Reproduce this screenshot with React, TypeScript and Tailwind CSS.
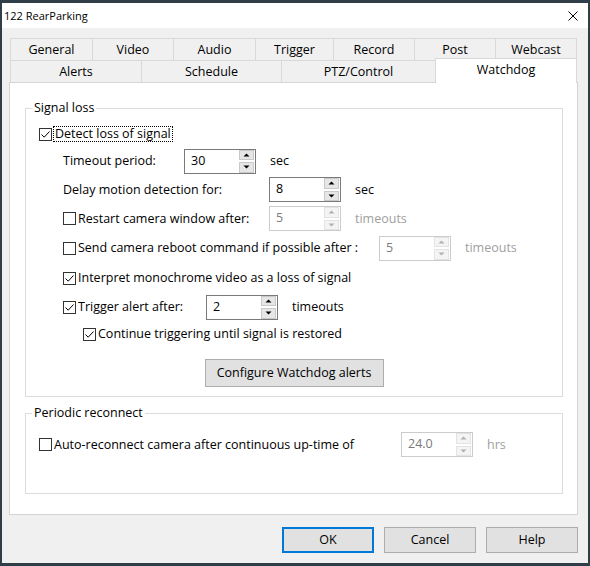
import React from "react";

function Check({ checked }: { checked?: boolean }) {
  return (
    <span className="w-[13px] h-[13px] border border-[#333333] bg-white flex items-center justify-center shrink-0">
      {checked && (
        <svg width="11" height="11" viewBox="0 0 11 11">
          <path d="M1.5 5.5 L4.2 8.2 L9.5 2.5" fill="none" stroke="#000" strokeWidth="1" />
        </svg>
      )}
    </span>
  );
}

function SpinBtn({ up, disabled }: { up?: boolean; disabled?: boolean }) {
  return (
    <div
      className={`flex-1 flex items-center justify-center border ${
        disabled ? "border-[#e3e3e3] bg-[#f4f4f4]" : "border-[#c9c9c9] bg-[#e6e6e6]"
      }`}
    >
      <svg width="7" height="4" viewBox="0 0 7 4">
        <path
          d={up ? "M0.5 3.5 L3.5 0.5 L6.5 3.5 Z" : "M0.5 0.5 L3.5 3.5 L6.5 0.5 Z"}
          fill={disabled ? "#b0b0b0" : "#000"}
        />
      </svg>
    </div>
  );
}

function Spin({ value, disabled }: { value: string; disabled?: boolean }) {
  return (
    <div
      className={`w-[72px] h-[25px] shrink-0 border bg-white flex ${
        disabled ? "border-[#cccccc]" : "border-[#7a7a7a]"
      }`}
    >
      <span
        className={`flex-1 pl-[6px] leading-[22px] ${
          disabled ? "text-[#7a7a7a]" : "text-black"
        }`}
      >
        {value}
      </span>
      <div className="w-[16px] flex flex-col gap-[2px] pr-[1px] py-[0px]">
        <SpinBtn up disabled={disabled} />
        <SpinBtn disabled={disabled} />
      </div>
    </div>
  );
}

function Unit({ children, disabled }: { children: React.ReactNode; disabled?: boolean }) {
  return (
    <span className={`ml-[14px] ${disabled ? "text-[#a0a0a0]" : "text-black"}`}>{children}</span>
  );
}

function Tab({ label, w, last }: { label: string; w: string; last?: boolean }) {
  return (
    <div
      className={`${w} h-full flex items-center justify-center border-t border-l border-[#d9d9d9] bg-[#f0f0f0] ${
        last ? "border-r" : ""
      }`}
    >
      {label}
    </div>
  );
}

export default function App() {
  return (
    <div className="w-[590px] h-[566px] bg-[#2f3e49] pt-[3px] pl-[2px] font-['Open_Sans','Noto_Sans',sans-serif] text-[12.5px] text-black leading-[16px]">
      <div className="w-[586px] h-[560px] bg-[#f0f0f0] flex flex-col">
        {/* title bar */}
        <div className="h-[25px] bg-white flex items-center justify-between pl-[2px] pr-[10px]">
          <span className="text-[11px]">122 RearParking</span>
          <svg width="10" height="10" viewBox="0 0 10 10">
            <path d="M0.5 0.5 L9.5 9.5 M9.5 0.5 L0.5 9.5" stroke="#000" strokeWidth="1" />
          </svg>
        </div>

        {/* body */}
        <div className="flex-1 flex flex-col pt-[10px] pl-[7px] pr-[10px]">
          {/* tabs */}
          <div className="ml-[1px] w-[567px] flex flex-col">
            <div className="h-[22px] flex">
              <Tab label="General" w="w-[82px]" />
              <Tab label="Video" w="w-[81px]" />
              <Tab label="Audio" w="w-[82px]" />
              <Tab label="Trigger" w="w-[78px]" />
              <Tab label="Record" w="w-[81px]" />
              <Tab label="Post" w="w-[81px]" />
              <Tab label="Webcast" w="w-[82px]" last />
            </div>
            <div className="h-[22px] flex">
              <Tab label="Alerts" w="w-[131px]" />
              <Tab label="Schedule" w="w-[140px]" />
              <Tab label="PTZ/Control" w="w-[154px]" />
              <div className="w-[142px] h-[25px] self-end -mb-px relative z-10 bg-white border-t border-l border-r border-[#d9d9d9] flex items-center justify-center pb-[2px]">
                Watchdog
              </div>
            </div>
          </div>

          {/* panel */}
          <div className="w-[569px] h-[433px] bg-white border border-[#d5d5d5] pt-[17px] pl-[15px] pr-[14px]">
            <fieldset className="border border-[#dcdcdc] pl-[13px] pt-[5px] pb-[9px]">
              <legend className="-ml-[7px] px-[2px] leading-[16px]">Signal loss</legend>
              <div className="h-[26px] flex items-center">
                <Check checked />
                <span className="ml-[1px] border border-dotted border-black px-[1px] leading-[14px]">
                  Detect loss of signal
                </span>
              </div>
              <div className="h-[28px] flex items-center ml-[24px]">
                <span className="w-[121px]">Timeout period:</span>
                <Spin value="30" />
                <Unit>sec</Unit>
              </div>
              <div className="h-[29px] flex items-center ml-[24px]">
                <span className="w-[206px]">Delay motion detection for:</span>
                <Spin value="8" />
                <Unit>sec</Unit>
              </div>
              <div className="h-[29px] flex items-center ml-[24px]">
                <div className="w-[206px] flex items-center gap-[2px]">
                  <Check />
                  <span>Restart camera window after:</span>
                </div>
                <Spin value="5" disabled />
                <Unit disabled>timeouts</Unit>
              </div>
              <div className="h-[30px] flex items-center ml-[24px]">
                <div className="w-[316px] flex items-center gap-[2px]">
                  <Check />
                  <span>Send camera reboot command if possible after :</span>
                </div>
                <Spin value="5" disabled />
                <Unit disabled>timeouts</Unit>
              </div>
              <div className="h-[30px] flex items-center ml-[24px] gap-[2px]">
                <Check checked />
                <span>Interpret monochrome video as a loss of signal</span>
              </div>
              <div className="h-[28px] flex items-center ml-[24px]">
                <div className="w-[143px] flex items-center gap-[2px]">
                  <Check checked />
                  <span>Trigger alert after:</span>
                </div>
                <Spin value="2" />
                <Unit>timeouts</Unit>
              </div>
              <div className="h-[26px] flex items-center ml-[44px] gap-[2px]">
                <Check checked />
                <span>Continue triggering until signal is restored</span>
              </div>
              <div className="mt-[12px] flex justify-center pr-[13px]">
                <button className="w-[179px] h-[28px] bg-[#e1e1e1] border border-[#adadad] flex items-center justify-center">
                  Configure Watchdog alerts
                </button>
              </div>
            </fieldset>

            <fieldset className="mt-[8px] border border-[#dcdcdc] pl-[13px] pt-[11px] pb-[36px]">
              <legend className="-ml-[7px] px-[2px] leading-[16px]">Periodic reconnect</legend>
              <div className="h-[25px] flex items-center">
                <div className="w-[362px] flex items-center gap-[2px]">
                  <Check />
                  <span>Auto-reconnect camera after continuous up-time of</span>
                </div>
                <Spin value="24.0" disabled />
                <Unit disabled>hrs</Unit>
              </div>
            </fieldset>
          </div>

          {/* buttons */}
          <div className="mt-[12px] flex justify-end gap-[10px]">
            <button className="w-[92px] h-[26px] bg-[#e1e1e1] border-2 border-[#0078d7] flex items-center justify-center">
              OK
            </button>
            <button className="w-[92px] h-[26px] bg-[#e1e1e1] border border-[#adadad] flex items-center justify-center">
              Cancel
            </button>
            <button className="w-[92px] h-[26px] bg-[#e1e1e1] border border-[#adadad] flex items-center justify-center">
              Help
            </button>
          </div>
        </div>
      </div>
    </div>
  );
}
